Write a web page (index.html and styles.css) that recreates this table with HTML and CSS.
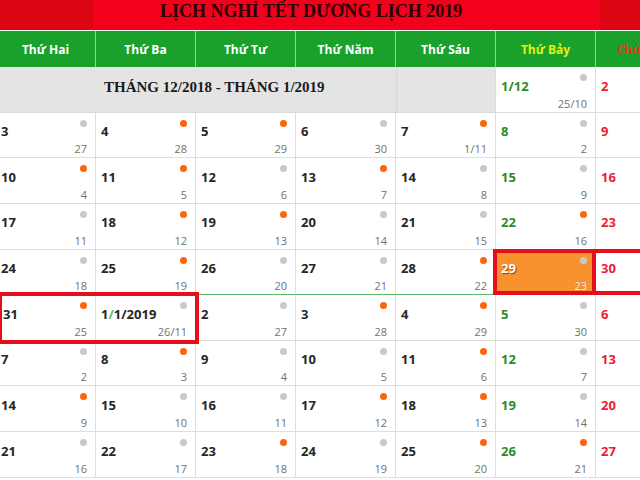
FILE: index.html
```html
<!DOCTYPE html>
<html lang="vi">
<head>
<meta charset="utf-8">
<title>Lịch nghỉ Tết Dương lịch 2019</title>
<link rel="stylesheet" href="styles.css">
</head>
<body>
<div class="page">
  <div class="title"><h1>LỊCH NGHỈ TẾT DƯƠNG LỊCH 2019</h1></div>
  <div class="head">
    <div class="hd">Thứ Hai</div>
    <div class="hd">Thứ Ba</div>
    <div class="hd">Thứ Tư</div>
    <div class="hd">Thứ Năm</div>
    <div class="hd">Thứ Sáu</div>
    <div class="hd sat">Thứ Bảy</div>
    <div class="hd sun">Chủ Nhật</div>
  </div>
  <div class="calwrap">
    <div class="cal">
      <div class="month">THÁNG 12/2018 - THÁNG 1/2019</div>
      <div class="month-blank"></div>
      <div class="cell sat"><div class="top"><span class="num"><span class="d1">1</span>/12</span><i class="dot g"></i></div><div class="lunar">25/10</div></div>
      <div class="cell sun"><div class="top"><span class="num">2</span><i class="dot g"></i></div><div class="lunar">26</div></div>

      <div class="cell"><div class="top"><span class="num">3</span><i class="dot g"></i></div><div class="lunar">27</div></div>
      <div class="cell"><div class="top"><span class="num">4</span><i class="dot o"></i></div><div class="lunar">28</div></div>
      <div class="cell"><div class="top"><span class="num">5</span><i class="dot o"></i></div><div class="lunar">29</div></div>
      <div class="cell"><div class="top"><span class="num">6</span><i class="dot g"></i></div><div class="lunar">30</div></div>
      <div class="cell"><div class="top"><span class="num">7</span><i class="dot o"></i></div><div class="lunar">1/11</div></div>
      <div class="cell sat"><div class="top"><span class="num">8</span><i class="dot g"></i></div><div class="lunar">2</div></div>
      <div class="cell sun"><div class="top"><span class="num">9</span><i class="dot g"></i></div><div class="lunar">3</div></div>

      <div class="cell"><div class="top"><span class="num">10</span><i class="dot o"></i></div><div class="lunar">4</div></div>
      <div class="cell"><div class="top"><span class="num">11</span><i class="dot o"></i></div><div class="lunar">5</div></div>
      <div class="cell"><div class="top"><span class="num">12</span><i class="dot g"></i></div><div class="lunar">6</div></div>
      <div class="cell"><div class="top"><span class="num">13</span><i class="dot o"></i></div><div class="lunar">7</div></div>
      <div class="cell"><div class="top"><span class="num">14</span><i class="dot g"></i></div><div class="lunar">8</div></div>
      <div class="cell sat"><div class="top"><span class="num">15</span><i class="dot g"></i></div><div class="lunar">9</div></div>
      <div class="cell sun"><div class="top"><span class="num">16</span><i class="dot g"></i></div><div class="lunar">10</div></div>

      <div class="cell"><div class="top"><span class="num">17</span><i class="dot g"></i></div><div class="lunar">11</div></div>
      <div class="cell"><div class="top"><span class="num">18</span><i class="dot o"></i></div><div class="lunar">12</div></div>
      <div class="cell"><div class="top"><span class="num">19</span><i class="dot o"></i></div><div class="lunar">13</div></div>
      <div class="cell"><div class="top"><span class="num">20</span><i class="dot g"></i></div><div class="lunar">14</div></div>
      <div class="cell"><div class="top"><span class="num">21</span><i class="dot g"></i></div><div class="lunar">15</div></div>
      <div class="cell sat"><div class="top"><span class="num">22</span><i class="dot o"></i></div><div class="lunar">16</div></div>
      <div class="cell sun"><div class="top"><span class="num">23</span><i class="dot g"></i></div><div class="lunar">17</div></div>

      <div class="cell gl"><div class="top"><span class="num">24</span><i class="dot g"></i></div><div class="lunar">18</div></div>
      <div class="cell gl"><div class="top"><span class="num">25</span><i class="dot o"></i></div><div class="lunar">19</div></div>
      <div class="cell gl"><div class="top"><span class="num">26</span><i class="dot g"></i></div><div class="lunar">20</div></div>
      <div class="cell gl"><div class="top"><span class="num">27</span><i class="dot g"></i></div><div class="lunar">21</div></div>
      <div class="cell gl"><div class="top"><span class="num">28</span><i class="dot o"></i></div><div class="lunar">22</div></div>
      <div class="cell hol"><div class="top"><span class="num">29</span><i class="dot g"></i></div><div class="lunar">23</div></div>
      <div class="cell sun"><div class="top"><span class="num">30</span><i class="dot g"></i></div><div class="lunar">24</div></div>

      <div class="cell first"><div class="top"><span class="num">31</span><i class="dot o"></i></div><div class="lunar">25</div></div>
      <div class="cell"><div class="top"><span class="num">1<span class="sl">/</span>1/2019</span><i class="dot g"></i></div><div class="lunar">26/11</div></div>
      <div class="cell"><div class="top"><span class="num">2</span><i class="dot g"></i></div><div class="lunar">27</div></div>
      <div class="cell"><div class="top"><span class="num">3</span><i class="dot o"></i></div><div class="lunar">28</div></div>
      <div class="cell"><div class="top"><span class="num">4</span><i class="dot o"></i></div><div class="lunar">29</div></div>
      <div class="cell sat"><div class="top"><span class="num">5</span><i class="dot g"></i></div><div class="lunar">30</div></div>
      <div class="cell sun"><div class="top"><span class="num">6</span><i class="dot g"></i></div><div class="lunar">1/12</div></div>

      <div class="cell"><div class="top"><span class="num">7</span><i class="dot g"></i></div><div class="lunar">2</div></div>
      <div class="cell"><div class="top"><span class="num">8</span><i class="dot o"></i></div><div class="lunar">3</div></div>
      <div class="cell"><div class="top"><span class="num">9</span><i class="dot g"></i></div><div class="lunar">4</div></div>
      <div class="cell"><div class="top"><span class="num">10</span><i class="dot g"></i></div><div class="lunar">5</div></div>
      <div class="cell"><div class="top"><span class="num">11</span><i class="dot o"></i></div><div class="lunar">6</div></div>
      <div class="cell sat"><div class="top"><span class="num">12</span><i class="dot g"></i></div><div class="lunar">7</div></div>
      <div class="cell sun"><div class="top"><span class="num">13</span><i class="dot g"></i></div><div class="lunar">8</div></div>

      <div class="cell"><div class="top"><span class="num">14</span><i class="dot o"></i></div><div class="lunar">9</div></div>
      <div class="cell"><div class="top"><span class="num">15</span><i class="dot g"></i></div><div class="lunar">10</div></div>
      <div class="cell"><div class="top"><span class="num">16</span><i class="dot g"></i></div><div class="lunar">11</div></div>
      <div class="cell"><div class="top"><span class="num">17</span><i class="dot o"></i></div><div class="lunar">12</div></div>
      <div class="cell"><div class="top"><span class="num">18</span><i class="dot o"></i></div><div class="lunar">13</div></div>
      <div class="cell sat"><div class="top"><span class="num">19</span><i class="dot g"></i></div><div class="lunar">14</div></div>
      <div class="cell sun"><div class="top"><span class="num">20</span><i class="dot g"></i></div><div class="lunar">15</div></div>

      <div class="cell"><div class="top"><span class="num">21</span><i class="dot g"></i></div><div class="lunar">16</div></div>
      <div class="cell"><div class="top"><span class="num">22</span><i class="dot g"></i></div><div class="lunar">17</div></div>
      <div class="cell"><div class="top"><span class="num">23</span><i class="dot o"></i></div><div class="lunar">18</div></div>
      <div class="cell"><div class="top"><span class="num">24</span><i class="dot g"></i></div><div class="lunar">19</div></div>
      <div class="cell"><div class="top"><span class="num">25</span><i class="dot o"></i></div><div class="lunar">20</div></div>
      <div class="cell sat"><div class="top"><span class="num">26</span><i class="dot o"></i></div><div class="lunar">21</div></div>
      <div class="cell sun"><div class="top"><span class="num">27</span><i class="dot g"></i></div><div class="lunar">22</div></div>
    </div>
    <div class="marks">
      <div class="box box1"></div>
      <div class="box box2"></div>
      <div class="sep29"></div>
    </div>
  </div>
</div>
</body>
</html>
```

FILE: styles.css
```css
html, body {
  margin: 0;
  padding: 0;
  background: #fff;
}
body {
  width: 640px;
  height: 480px;
  overflow: hidden;
  font-family: "Open Sans", "DejaVu Sans", sans-serif;
}
.page {
  width: 700px;
  margin-left: -4px;
}
.title {
  height: 30px;
  border-bottom: 1px solid #f4fbf4;
  background: linear-gradient(to right, #dc0612 0 97px, #f2001c 97px 604px, #dc0612 604px);
  display: flex;
  align-items: flex-start;
}
.title h1 {
  margin: 0;
  padding-left: 164px;
  font-family: "Liberation Serif", "Times New Roman", serif;
  font-weight: bold;
  font-size: 18px;
  line-height: 23px;
  color: #2d0205;
}
.head {
  display: grid;
  grid-template-columns: repeat(7, 100px);
  height: 36px;
  background: #1aa12c;
}
.hd {
  display: flex;
  align-items: center;
  justify-content: center;
  border-right: 1px solid #8fd29a;
  color: #fff;
  font-weight: bold;
  font-size: 12px;
}
.hd.sat { color: #e6f20f; }
.hd.sun { color: #e8381c; }

.calwrap {
  display: grid;
}
.cal, .marks {
  grid-area: 1 / 1;
  display: grid;
  grid-template-columns: repeat(7, 100px);
  grid-template-rows: repeat(9, 45.65px);
}
.marks {
  pointer-events: none;
  z-index: 2;
}
.month {
  grid-column: span 4;
  background: #e4e4e4;
  border-bottom: 1px solid #dadada;
  padding: 10.5px 0 0 108px;
  font-family: "Liberation Serif", "Times New Roman", serif;
  font-weight: bold;
  font-size: 15px;
  line-height: 18px;
  color: #1a1a1a;
}
.month-blank {
  background: #e4e4e4;
  border-left: 1px solid #d8d8d8;
  border-right: 1px solid #dcdcdc;
  border-bottom: 1px solid #dadada;
}
.cell {
  box-sizing: border-box;
  border-right: 1px solid #dedede;
  border-bottom: 1px solid #dedede;
  padding: 7px 8px 3px 5px;
  display: flex;
  flex-direction: column;
  min-width: 0;
}
.cell.first { padding-left: 7px; }
.cell.gl { border-bottom-color: #5db865; }
.top {
  display: flex;
  justify-content: space-between;
  align-items: flex-start;
}
.num {
  margin-top: 5.5px;
  font-weight: bold;
  font-size: 13px;
  line-height: 13px;
  color: #262626;
  white-space: nowrap;
}
.sat .num { color: #2e8a25; }
.sat .num .d1 { color: #3d8a26; }
.sun .num { color: #ef1a2f; }
.num .sl { color: #63b86a; }
.dot {
  display: block;
  width: 7px;
  height: 7px;
  border-radius: 50%;
  flex: none;
}
.dot.g { background: #c9c9c9; }
.dot.o { background: #fb6510; }
.lunar {
  margin-top: auto;
  text-align: right;
  font-size: 11px;
  line-height: 11px;
  color: #707070;
}
.cell.hol {
  background: #f7922f;
}
.hol .num {
  color: #fff;
  text-shadow: 1px 1px 1px #7b4a1c;
}
.hol .lunar {
  color: #fff;
  text-shadow: 0 0 1px #9a5b20;
}
.box {
  border: 4px solid #e50f1c;
}
.box1 {
  grid-row: 6;
  grid-column: 1 / 3;
  margin: -3.5px -3px -3px 3px;
  border-left-width: 3px;
}
.box2 {
  grid-row: 5;
  grid-column: 6 / 8;
  margin: -0.5px 0 0 -3px;
}
.sep29 {
  grid-row: 5;
  grid-column: 6;
  border-right: 4px solid #e50f1c;
}
```
